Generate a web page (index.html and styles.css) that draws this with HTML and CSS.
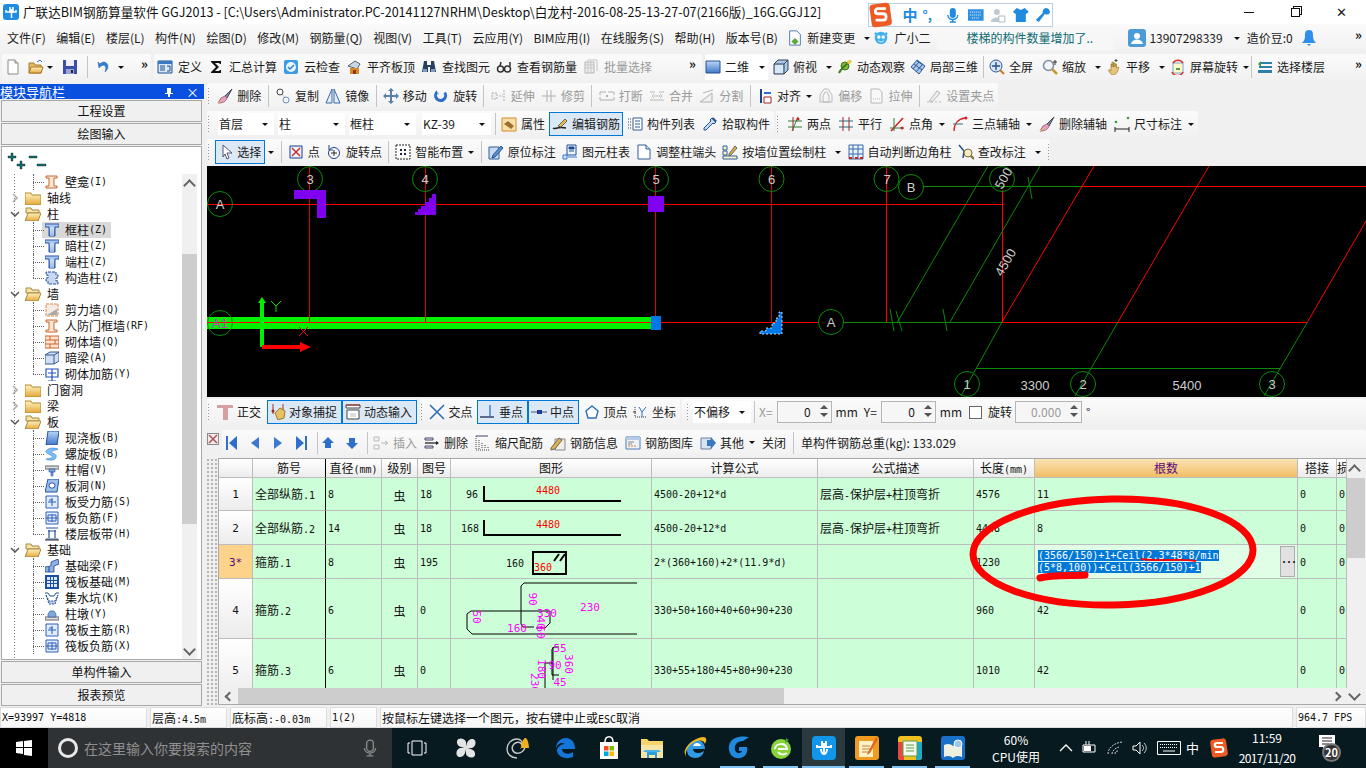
FILE: index.html
```html
<!DOCTYPE html>
<html lang="zh-CN">
<head>
<meta charset="utf-8">
<title>广联达BIM钢筋算量软件 GGJ2013</title>
<link rel="stylesheet" href="styles.css">
</head>
<body>
<svg class="defs" aria-hidden="true">
<defs>
<linearGradient id="gb" x1="0" y1="0" x2="0" y2="1"><stop offset="0" stop-color="#bcd6f6"/><stop offset="1" stop-color="#3f78c8"/></linearGradient>
<linearGradient id="gy" x1="0" y1="0" x2="0" y2="1"><stop offset="0" stop-color="#fff3c0"/><stop offset="1" stop-color="#e5a73a"/></linearGradient>
<symbol id="new" viewBox="0 0 16 16"><path d="M3 1h7l3 3v11H3z" fill="#fff" stroke="#8a8a8a"/><path d="M10 1v3h3" fill="#ddd" stroke="#8a8a8a"/></symbol>
<symbol id="open" viewBox="0 0 16 16"><path d="M1 4h5l1 2h6v8H1z" fill="#e6bb66" stroke="#a57a28"/><path d="M3 8h12l-2 6H1z" fill="url(#gy)" stroke="#a57a28"/><path d="M9 3l3-2 2 2" fill="none" stroke="#3a70c8"/></symbol>
<symbol id="save" viewBox="0 0 16 16"><path d="M1 1h14v14H1z" fill="#3b4fa8"/><path d="M4 1h8v6H4z" fill="#eef"/><path d="M4 10h8v5H4z" fill="#9aa6d8"/><path d="M9 11h2v3H9z" fill="#223"/></symbol>
<symbol id="undo" viewBox="0 0 16 16"><path d="M3 3l1 6 2-2c4-2 6 1 4 6 4-3 4-9-1-10-2 0-3 1-4 2z" fill="#2f7fd6" stroke="#1d5aa8" stroke-width=".5"/></symbol>
<symbol id="def" viewBox="0 0 16 16"><path d="M1 2h14v12H1z" fill="#dbe8f8" stroke="#1d4f8f"/><path d="M1 2h14v3H1z" fill="#3a78c0"/><path d="M3 7h5M3 9h5M3 11h5M10 7h3v5h-3" stroke="#1d4f8f" fill="none"/></symbol>
<symbol id="sigma" viewBox="0 0 16 16"><path d="M3 2h10v3h-1l-1-1H7l4 4-4 4h4l1-1h1v3H3v-1l5-5-5-5z" fill="#111"/></symbol>
<symbol id="cloud" viewBox="0 0 16 16"><rect x="1" y="1" width="14" height="14" rx="2" fill="#3b9be6"/><circle cx="8" cy="8" r="5" fill="#eaf6ff"/><path d="M5 8l2 2 4-4" fill="none" stroke="#2a7fd0" stroke-width="1.5"/></symbol>
<symbol id="plat" viewBox="0 0 16 16"><path d="M2 7l7-5 5 3-3 5z" fill="#c8d6e6" stroke="#566"/><path d="M4 9h9v6H4z" fill="#d88a2a"/><path d="M7 11h3v4H7z" fill="#8a3a18"/></symbol>
<symbol id="binoc" viewBox="0 0 16 16"><path d="M3 2h3v4h4V2h3l2 11H9V8H7v5H1z" fill="#26415f"/><path d="M2 10h4v3H2zM10 10h4v3h-4z" fill="#7e9cbe"/></symbol>
<symbol id="glass" viewBox="0 0 16 16"><circle cx="4.5" cy="10" r="3" fill="none" stroke="#333" stroke-width="1.5"/><circle cx="11.5" cy="10" r="3" fill="none" stroke="#333" stroke-width="1.5"/><path d="M4 7l1-4M14 7V3" stroke="#333" stroke-width="1.5"/></symbol>
<symbol id="batch" viewBox="0 0 16 16"><path d="M2 3h9v11H2z" fill="#eee" stroke="#b5b5b5"/><path d="M2 6h9M2 9h9M5 3v11M8 3v11" stroke="#c5c5c5"/><path d="M4 1h10v11" fill="none" stroke="#c5c5c5"/></symbol>
<symbol id="sq" viewBox="0 0 16 16"><path d="M1 2h14v12H1z" fill="url(#gb)" stroke="#27518f"/></symbol>
<symbol id="cube" viewBox="0 0 16 16"><path d="M1 5l4-4h10v10l-4 4H1z" fill="#a9c8ea" stroke="#345"/><path d="M1 5h10v10M11 5l4-4" fill="none" stroke="#345"/><path d="M2 6h8v8H2z" fill="#d9e8f8"/></symbol>
<symbol id="orbit" viewBox="0 0 16 16"><circle cx="8" cy="7" r="4" fill="#7fb83a" stroke="#3b7a1a"/><path d="M2 14C4 10 8 6 14 2" stroke="#3b7a1a" stroke-width="2" fill="none"/><circle cx="12" cy="3" r="2" fill="#f0d040"/></symbol>
<symbol id="cube3" viewBox="0 0 16 16"><path d="M1 8l6-7 8 6-6 8z" fill="#a8c7ec" stroke="#30598f"/><path d="M4 5l8 6M7 2l6 4M3 10l6-7M6 13l6-7" stroke="#30598f" fill="none"/></symbol>
<symbol id="zfull" viewBox="0 0 16 16"><circle cx="7" cy="7" r="6" fill="#d6e6f8" stroke="#37578a"/><path d="M7 3v8M3 7h8" stroke="#27518f" stroke-width="1.4"/><path d="M11 11l4 4" stroke="#c87a20" stroke-width="2"/></symbol>
<symbol id="zoom" viewBox="0 0 16 16"><circle cx="6.5" cy="6.5" r="5" fill="#f2f6fb" stroke="#7c8ca0" stroke-width="1.5"/><path d="M10 10l5 5" stroke="#c49a30" stroke-width="2.5"/><path d="M13 1v5M11 3h4" stroke="#333"/></symbol>
<symbol id="pan" viewBox="0 0 16 16"><path d="M5 8V5h1v3-5h1.5v5-4H9v4-3h1.500v4l2-1c1 1-2 8-5 8-2 0-4-2-5-5 1-1 2 0 2.500 1z" fill="#e8c47a" stroke="#9a7a30" stroke-width=".7"/><path d="M10 0v3M8.500 1.500h3" stroke="#445"/></symbol>
<symbol id="srot" viewBox="0 0 16 16"><rect x="3" y="4" width="10" height="10" fill="#fff8c8" stroke="#7aa3d0"/><path d="M3 4a6 6 0 0 1 10 0" fill="none" stroke="#d8302a" stroke-width="1.500"/><path d="M13 13a6 6 0 0 1-11 0" fill="none" stroke="#d8302a" stroke-width="1.500"/><path d="M6 9h4v2H6z" fill="#4aa04a"/></symbol>
<symbol id="floors" viewBox="0 0 16 16"><path d="M4 3h11v2H4zM2 7h13v2H2zM1 11h14v3H1z" fill="#2f7fa8"/><path d="M1 5l3-3v6z" fill="#3a9a3a"/></symbol>
<symbol id="brush" viewBox="0 0 16 16"><path d="M15 1L8 8l2 2z" fill="#7a8ab0" stroke="#445"/><path d="M8 8l-4 2-3 5c4 0 8-1 9-5z" fill="#e8a0c0" stroke="#a06a80"/><path d="M1 15l4-3" stroke="#e8c050"/></symbol>
<symbol id="copy" viewBox="0 0 16 16"><circle cx="5" cy="4" r="3" fill="none" stroke="#444"/><circle cx="11" cy="12" r="3" fill="none" stroke="#6a90c0"/><path d="M7 6l3 4" stroke="#777" stroke-dasharray="1 1"/></symbol>
<symbol id="mirror" viewBox="0 0 16 16"><path d="M7 1v14H1zM9 1v14h6z" fill="#e4eef8" stroke="#3a6aa8"/></symbol>
<symbol id="move" viewBox="0 0 16 16"><path d="M8 0l3 3H9v4h4V5l3 3-3 3V9H9v4h2l-3 3-3-3h2V9H3v2L0 8l3-3v2h4V3H5z" fill="#5a7fa8"/></symbol>
<symbol id="rot" viewBox="0 0 16 16"><path d="M3 3a6.500 6.500 0 1 0 9 0l-2 2a3.500 3.500 0 1 1-5 0v3z" fill="#2f6fcc" transform="rotate(10 8 8)"/></symbol>
<symbol id="ext" viewBox="0 0 16 16"><path d="M1 5h5v6H1zM13 2v12M8 8h4" stroke="#b0b0b0" fill="#eee" stroke-dasharray="2 1"/></symbol>
<symbol id="trim" viewBox="0 0 16 16"><path d="M1 8h14M6 2v12M10 2v12" stroke="#b0b0b0" fill="none"/></symbol>
<symbol id="brk" viewBox="0 0 16 16"><path d="M1 4h6M9 4h6M1 12h14M1 4v3M15 4v3M1 12V9M15 12V9" stroke="#b0b0b0" fill="none"/><path d="M7 7l2 2M9 7l-2 2" stroke="#b0b0b0"/></symbol>
<symbol id="merge" viewBox="0 0 16 16"><path d="M1 4h5M10 4h5M1 12h14M5 8h6M5 6L3 8l2 2M11 6l2 2-2 2" stroke="#b8b8b8" fill="none"/></symbol>
<symbol id="split" viewBox="0 0 16 16"><path d="M1 14l12-9v9zM4 5l10-3" stroke="#b0b0b0" fill="#efefef"/></symbol>
<symbol id="algn" viewBox="0 0 16 16"><path d="M3 1h2v14H3z" fill="#1d3f8f"/><path d="M7 4h7v2H7z" fill="#2f6fcc"/><path d="M7 9h7v6H7z" fill="#fff" stroke="#a02828"/></symbol>
<symbol id="offs" viewBox="0 0 16 16"><path d="M2 14V7l4-6h4l4 6v7z" fill="none" stroke="#bbb"/><path d="M5 14V8l2-4h2l2 4v6z" fill="none" stroke="#bbb"/></symbol>
<symbol id="strch" viewBox="0 0 16 16"><path d="M2 1h8l3 3v11H2z" fill="#f8f8f8" stroke="#b8b8b8"/><path d="M4 11h7" stroke="#b8b8b8" stroke-dasharray="1 1"/></symbol>
<symbol id="grips" viewBox="0 0 16 16"><path d="M1 14h14" stroke="#bbb" stroke-dasharray="2 2"/><path d="M4 12l7-9 3 2-7 8-3 1z" fill="#eee" stroke="#b4b4b4"/></symbol>
<symbol id="prop" viewBox="0 0 16 16"><path d="M1 2h14v13H1z" fill="#f6e2a8" stroke="#d88a2a"/><path d="M3 8l4-3 6 5-3 3z" fill="#9a7030"/></symbol>
<symbol id="edit" viewBox="0 0 16 16"><path d="M1 12c2 2 4-2 13 0" fill="none" stroke="#222" stroke-width="1.500"/><path d="M6 10l7-7 2 2-6 6z" fill="#e8c050" stroke="#665"/></symbol>
<symbol id="list" viewBox="0 0 16 16"><path d="M6 2h9v12H6z" fill="#fff" stroke="#2f5f9a"/><path d="M8 5h5M8 8h5M8 11h5" stroke="#2f5f9a"/><path d="M1 3h3M1 6h3M1 9h3M1 12h3" stroke="#445" stroke-dasharray="1 1"/></symbol>
<symbol id="pick" viewBox="0 0 16 16"><path d="M10 2l4 4-2 2-1-1-7 7H2v-2l7-7-1-1z" fill="#c6dcf5" stroke="#25528e"/><path d="M11 1l4 4-2 1-3-3z" fill="#25528e"/></symbol>
<symbol id="twop" viewBox="0 0 16 16"><path d="M1 5h14M1 11h14M11 1L5 15" stroke="#2f7f3a" fill="none"/><path d="M6 1v14" stroke="#a02828"/><circle cx="11" cy="3" r="1.500" fill="#d02020"/></symbol>
<symbol id="para" viewBox="0 0 16 16"><path d="M1 5h14M1 11h14" stroke="#1f6a7a"/><path d="M5 1v14M11 1v14" stroke="#a02828"/></symbol>
<symbol id="ang" viewBox="0 0 16 16"><path d="M1 12h14" stroke="#2f7f3a"/><path d="M2 15L14 2" stroke="#d02020" stroke-width="1.500"/><path d="M5 2v13" stroke="#2f7f3a"/><circle cx="13" cy="12" r="1.500" fill="#d02020"/></symbol>
<symbol id="three" viewBox="0 0 16 16"><path d="M2 15C2 8 6 3 13 2" fill="none" stroke="#d02020" stroke-width="1.300"/><path d="M1 8h10" stroke="#2f6f7a"/><circle cx="14" cy="2" r="1.500" fill="#d02020"/></symbol>
<symbol id="dim" viewBox="0 0 16 16"><path d="M1 11v5M15 11v5M1 13h14" stroke="#222"/><circle cx="2" cy="6" r="1.300" fill="#3a9a3a"/><circle cx="14" cy="2" r="1.300" fill="#3a9a3a"/></symbol>
<symbol id="sel" viewBox="0 0 16 16"><path d="M4 1l9 8H8l2 5-2 1-2-5-2 3z" fill="#fff" stroke="#556"/></symbol>
<symbol id="pt" viewBox="0 0 16 16"><path d="M2 2h12v12H2z" fill="#eaf0fa" stroke="#1d3f8f"/><path d="M4 4l8 8M12 4l-8 8" stroke="#d02020" stroke-width="1.300"/></symbol>
<symbol id="rpt" viewBox="0 0 16 16"><circle cx="8" cy="9" r="5.500" fill="#fff" stroke="#1d3f8f"/><path d="M8 6v6M5 9h6" stroke="#222"/><path d="M3 1v5h4" fill="none" stroke="#1d3f8f"/></symbol>
<symbol id="smart" viewBox="0 0 16 16"><path d="M1 1h14v14H1z" fill="#fff" stroke="#222" stroke-dasharray="2 1"/><path d="M5 5h2v2H5zM9 9h2v2H9zM9 5h2v2H9zM5 9h2v2H5z" fill="#225"/></symbol>
<symbol id="inpl" viewBox="0 0 16 16"><path d="M1 3h10v12H1z" fill="#c8dcf5" stroke="#2f5f9a"/><path d="M5 11l8-9 2 2-8 9-3 1z" fill="#5a8fd0" stroke="#25528e"/></symbol>
<symbol id="ctab" viewBox="0 0 16 16"><path d="M5 1h9v10H5z" fill="#eef4fc" stroke="#1d4f8f"/><path d="M7 3h5v2H7zM7 7h5" stroke="#1d4f8f" fill="#1d4f8f"/><path d="M1 11h4v4H1zM6 13h9" stroke="#2f7fd0" fill="#cfe0f6"/></symbol>
<symbol id="adj" viewBox="0 0 16 16"><path d="M2 1h8l4 4v10H2z" fill="#fff" stroke="#2f5f9a"/><path d="M10 1v4h4" fill="#cfe0f6" stroke="#2f5f9a"/></symbol>
<symbol id="byw" viewBox="0 0 16 16"><path d="M1 2h4v4H1zM1 7h4v4H1zM1 12h14v3H1z" fill="#fff6c8" stroke="#2f5f9a"/><path d="M7 10l6-8 2 2-6 7-2 1z" fill="#e0b040" stroke="#666"/></symbol>
<symbol id="auto" viewBox="0 0 16 16"><path d="M1 1h14v14H1zM1 5h14M1 10h14M5 1v14M10 1v14" fill="#e8f0fc" stroke="#3a6aa8"/><path d="M1 13h3v2H1zM7 13h3v2H7zM12 13h3v2h-3z" fill="#d02020"/></symbol>
<symbol id="chk" viewBox="0 0 16 16"><path d="M1 1l5 6-1 7" fill="none" stroke="#25528e" stroke-width="1.500"/><circle cx="10" cy="9" r="4" fill="#f3ecc8" stroke="#7c6a30"/><path d="M13 12l3 3" stroke="#7c6a30" stroke-width="2"/></symbol>
<symbol id="orth" viewBox="0 0 16 16"><path d="M0 1h16v3H11v12H6V4H0z" fill="#d6a0a0"/></symbol>
<symbol id="snap" viewBox="0 0 16 16"><path d="M3 0v10M13 0v6" stroke="#a02828"/><circle cx="3" cy="7" r="1.500" fill="#a02828"/><path d="M5 9l5-5 5 3-1 7-6 2z" fill="#e8c060" stroke="#9a7a30"/></symbol>
<symbol id="dyn" viewBox="0 0 16 16"><path d="M1 1h14v3H1zM2 6h12v9H2z" fill="#fff" stroke="#444"/><path d="M5 9h6v4H5z" fill="#ddd"/><path d="M1 1h14" stroke="#a02828"/></symbol>
<symbol id="cross" viewBox="0 0 16 16"><path d="M1 1l14 14M15 1L1 15" stroke="#2f6fb8" stroke-width="1.600"/></symbol>
<symbol id="perp" viewBox="0 0 16 16"><path d="M0 13h14" stroke="#225" stroke-width="1.300"/><path d="M10 1v12" stroke="#2f6fcc" stroke-width="1.300"/></symbol>
<symbol id="mid" viewBox="0 0 16 16"><path d="M0 8h16" stroke="#556"/><path d="M6 6h5v4H6z" fill="#1d3f8f"/></symbol>
<symbol id="vert" viewBox="0 0 16 16"><path d="M8 2l6 5-2 7H4L2 7z" fill="#fff" stroke="#2f6fb8" stroke-width="1.400"/></symbol>
<symbol id="coord" viewBox="0 0 16 16"><path d="M3 3v10h11" stroke="#333" fill="none" stroke-dasharray="1 1"/><path d="M7 3l3 5 4-5M10 8v5" stroke="#2f6fcc" fill="none"/><path d="M1 8h3" stroke="#333"/></symbol>
<symbol id="first" viewBox="0 0 16 16"><path d="M3 1h2v14H3zM14 1v14L6 8z" fill="#2f6fcc"/></symbol>
<symbol id="prev" viewBox="0 0 16 16"><path d="M12 2v12L4 8z" fill="#3a7ad0"/></symbol>
<symbol id="next" viewBox="0 0 16 16"><path d="M4 2v12l8-6z" fill="#3a7ad0"/></symbol>
<symbol id="last" viewBox="0 0 16 16"><path d="M11 1h2v14h-2zM2 1v14l8-7z" fill="#2f6fcc"/></symbol>
<symbol id="up" viewBox="0 0 16 16"><path d="M8 2l6 6h-3v5H5V8H2z" fill="#2f6fcc"/></symbol>
<symbol id="down" viewBox="0 0 16 16"><path d="M8 14l6-6h-3V3H5v5H2z" fill="#2f6fcc"/></symbol>
<symbol id="ins" viewBox="0 0 16 16"><path d="M1 2h5v4H1zM1 10h5v4H1z" fill="#f4f4f4" stroke="#bbb"/><path d="M8 8h7M12 6l3 2-3 2" stroke="#bbb" fill="none"/></symbol>
<symbol id="del" viewBox="0 0 16 16"><path d="M1 3h8v2H1zM1 11h8v2H1z" fill="#eef" stroke="#446"/><path d="M1 8h13" stroke="#222" stroke-width="1.300"/><path d="M12 6l3 2-3 2z" fill="#222"/></symbol>
<symbol id="scale" viewBox="0 0 16 16"><path d="M1 1v14h14M4 5v9M7 8v6M10 10v4M13 12v2" stroke="#444" fill="none" stroke-dasharray="1 1"/><path d="M1 1h12" stroke="#446"/></symbol>
<symbol id="info" viewBox="0 0 16 16"><path d="M5 4h10v11H5z" fill="#f0f0e8" stroke="#889"/><path d="M1 13l8-10 3 2-7 9-4 1z" fill="#e0b050" stroke="#665"/></symbol>
<symbol id="lib" viewBox="0 0 16 16"><path d="M1 2h14v12H1z" fill="#eef3fb" stroke="#4a7ab8"/><path d="M1 2h14v3H1z" fill="#b4cbe9"/><path d="M3 7h6M3 9h4" stroke="#888"/><path d="M3 11h2M6 11h2M9 11h2" stroke="#d08030"/></symbol>
<symbol id="oth" viewBox="0 0 16 16"><path d="M1 3h10v11H1z" fill="#d7e4f5" stroke="#6c7f99"/><path d="M7 5h4V2l5 6-5 6v-3H7z" fill="#3a78c0"/></symbol>
<symbol id="fc" viewBox="0 0 16 14"><path d="M0 2h6l1 2h9v10H0z" fill="url(#gy)" stroke="#b08a30"/></symbol>
<symbol id="fo" viewBox="0 0 16 14"><path d="M1 1h5l1 2h7v3H1z" fill="#f5e3a8" stroke="#a58a40"/><path d="M3 6h13l-3 8H0z" fill="url(#gy)" stroke="#a58a40"/></symbol>
<symbol id="cr" viewBox="0 0 10 10"><path d="M3 1l4 4-4 4" fill="none" stroke="#aaa" stroke-width="1.500"/></symbol>
<symbol id="cd" viewBox="0 0 10 10"><path d="M1 3l4 4 4-4" fill="none" stroke="#555" stroke-width="1.500"/></symbol>
<symbol id="ni" viewBox="0 0 14 14"><path d="M1 1h11v2H9v8h3v2H1v-2h3V3H1z" fill="#fde8d8" stroke="#c8642a"/></symbol>
<symbol id="tc" viewBox="0 0 14 14"><path d="M0 1h14v3H10v9H4V4H0z" fill="url(#gb)" stroke="#2750a0"/><path d="M5 4h4v9H5z" fill="#fff" opacity=".5"/></symbol>
<symbol id="gzz" viewBox="0 0 14 14"><path d="M3 1h8v3h2v3h-2v3h2v3H3v-3H1V7h2V4H1V1z" fill="#c8d8f0" stroke="#2750a0" stroke-dasharray="3 1"/></symbol>
<symbol id="shw" viewBox="0 0 14 14"><path d="M1 1h12v12H1z" fill="#f4ece4" stroke="#d88a4a" stroke-dasharray="3 1"/><path d="M2 12L12 6v6z" fill="#aaa"/></symbol>
<symbol id="brk2" viewBox="0 0 14 14"><path d="M0 1h14v12H0z" fill="#fde3d0" stroke="#c8642a"/><path d="M0 5h14M0 9h14M5 1v4M10 5v4M5 9v4" stroke="#c8642a"/></symbol>
<symbol id="bm" viewBox="0 0 14 14"><path d="M0 4l5-3h9v9l-5 3H0z" fill="#cfe0f6" stroke="#345a8f"/><path d="M0 4h9v9M9 4l5-3" fill="none" stroke="#345a8f"/></symbol>
<symbol id="mj" viewBox="0 0 14 14"><path d="M1 2h12v8H1zM7 2v12M3 6h8M3 14h8" fill="none" stroke="#2750c0" stroke-width="1.200"/></symbol>
<symbol id="xj" viewBox="0 0 14 14"><path d="M3 0h11l-2 14H1z" fill="url(#gb)" stroke="#2750a0"/></symbol>
<symbol id="lx" viewBox="0 0 14 14"><path d="M1 4c3-4 9-3 12-2-4 2-8 2-6 4 3 1 6 2 3 6-3 2-7 1-9 0 4-1 8-1 6-3C4 7 0 6 1 4z" fill="#7fbdf0" stroke="#2f7fd0" stroke-width=".6"/></symbol>
<symbol id="zm" viewBox="0 0 14 14"><path d="M0 3h14v3H0z" fill="#ddd" stroke="#666"/><path d="M4 6h6v3H4zM6 9h2v4H6z" fill="#7fa8dc" stroke="#2750a0" stroke-width=".6"/></symbol>
<symbol id="bd" viewBox="0 0 14 14"><path d="M3 0h11l-2 13H0z" fill="#9cc0ee" stroke="#2750a0"/><rect x="4" y="4" width="6" height="5" rx="2.500" fill="#fff" stroke="#2750a0"/></symbol>
<symbol id="sl" viewBox="0 0 14 14"><path d="M1 1h12v12H1z" fill="#e2ecfb" stroke="#2f5fb8"/><path d="M7 3v8M3 7h8M4 5h4" stroke="#2f5fb8" fill="none"/></symbol>
<symbol id="fj" viewBox="0 0 14 14"><path d="M1 1h12v12H1z" fill="#e2ecfb" stroke="#2f5fb8"/><path d="M1 7h12M7 3v8M3 4h8v6H3z" fill="none" stroke="#2f5fb8"/></symbol>
<symbol id="bdd" viewBox="0 0 14 14"><path d="M1 1h12M1 12h12M4 3v8M10 3v8M3 4h8" stroke="#2750a0" fill="none" stroke-width="1.200"/><path d="M0 13h14" stroke="#222"/></symbol>
<symbol id="jcl" viewBox="0 0 14 14"><path d="M0 13V8l6-1V3l7-3 1 5-5 2v6z" fill="#8fb4e4" stroke="#1d3f8f" stroke-width=".8"/><path d="M4 8v5" stroke="#1d3f8f"/></symbol>
<symbol id="fb" viewBox="0 0 14 14"><path d="M0 0h14v14H0z" fill="#1d4f9f"/><path d="M2 2h3v3H2zM6 2h2v3H6zM9 2h3v3H9zM2 6h3v2H2zM6 6h2v2H6zM9 6h3v2H9zM2 9h3v3H2zM6 9h2v3H6zM9 9h3v3H9z" fill="#dbe7f8"/></symbol>
<symbol id="jsk" viewBox="0 0 14 14"><path d="M0 2h3l2 3h4l2-3h3" fill="none" stroke="#2750a0"/><path d="M1 4l3 6h6l3-6-3 9H4z" fill="#b8cde8" stroke="#2750a0" stroke-dasharray="2 1"/></symbol>
<symbol id="zd" viewBox="0 0 14 14"><path d="M0 10h14v3H0z" fill="#ddd" stroke="#666"/><path d="M3 7l2-3h4l2 3v3H3z" fill="#7fa8dc" stroke="#2750a0" stroke-width=".6"/></symbol>
<symbol id="win" viewBox="0 0 16 16"><path d="M0 2l7-1v6H0zM8 1l8-1v7H8zM0 8h7v6l-7-1zM8 8h8v8l-8-1z" fill="#fff"/></symbol>
<symbol id="mic" viewBox="0 0 16 16"><rect x="5" y="1" width="6" height="10" rx="3" fill="none" stroke="#8a8a8a" stroke-width="1.200"/><path d="M3 8c0 6 10 6 10 0M8 13v2M5 15h6" fill="none" stroke="#8a8a8a" stroke-width="1.200"/></symbol>
<symbol id="imem" viewBox="0 0 16 16"><rect x="5" y="1" width="6" height="10" rx="3" fill="#1f8ae0"/><path d="M3 8c0 6 10 6 10 0M8 13v2M5 15h6" fill="none" stroke="#1f8ae0" stroke-width="1.400"/></symbol>
<symbol id="tv" viewBox="0 0 20 16"><path d="M5 1h10v14H5zM3 3H1v10h2M17 3h2v10h-2" fill="none" stroke="#fff"/></symbol>
<symbol id="fan" viewBox="0 0 22 22"><path d="M11 11C7 11 1 9 2 4c1-4 8-3 9 1zM11 11c0-4 2-10 7-9 4 1 3 8-1 9zM11 11c4 0 10 2 9 7-1 4-8 3-9-1zM11 11c0 4-2 10-7 9-4-1-3-8 1-9z" fill="#e4e4e4"/></symbol>
<symbol id="swirl" viewBox="0 0 26 24"><path d="M13 22c-6 0-10-4-10-9S7 3 13 3c4 0 6 3 5 6-1-3-5-4-8-1s-2 8 2 9 9-2 9-7" fill="none" stroke="#c8c8c8" stroke-width="1.400"/><path d="M17 13c0-5 2-10 4-11s4 5 4 10h2h-11z" fill="#f0b020"/></symbol>
<symbol id="edge" viewBox="0 0 22 22"><path d="M2 11C2 4 8 1 12 1c6 0 9 5 9 11H8c0 5 7 6 11 3v5c-7 3-16 0-16-7 1-4 5-6 8-6-3-2-7-1-9 4z" fill="#1376d8"/></symbol>
<symbol id="store" viewBox="0 0 22 24"><path d="M2 6h18v17H2z" fill="#fff"/><path d="M7 6c0-7 8-7 8 0" fill="none" stroke="#fff" stroke-width="1.500"/><path d="M6 10h4.500v4.500H6z" fill="#f25022"/><path d="M11.500 10H16v4.500h-4.500z" fill="#7fba00"/><path d="M6 15.500h4.500V20H6z" fill="#00a4ef"/><path d="M11.500 15.500H16V20h-4.500z" fill="#ffb900"/></symbol>
<symbol id="fold" viewBox="0 0 24 22"><path d="M1 2h6l2 2h14v17H1z" fill="#f8d56a"/><path d="M1 8h22v13H1z" fill="#f5e6a8"/><path d="M7 15h10v6h-2v-3H9v3H7z" fill="#2f9bd8"/><path d="M5 13h14l2 2H3z" fill="#4ab0e8"/></symbol>
<symbol id="ie" viewBox="0 0 24 24"><path d="M4 14c0-6 5-10 10-10 5 0 8 4 8 9H10c0 5 7 5 11 2-1 4-4 7-8 7-6 0-9-3-9-8z" fill="#2f9ae8"/><path d="M10 10h8c-1-4-7-4-8 0z" fill="#fff"/><path d="M2 18C0 12 10 2 20 1c4 0 4 3 2 7C21 4 16 3 10 7 5 10 2 15 3 21z" fill="#f0b820"/></symbol>
<symbol id="gg" viewBox="0 0 24 24"><path d="M13 1c-7 1-11 6-10 13 1 6 6 9 11 8 6-1 8-6 7-11h-8v4h3c-1 3-6 3-7-1-1-5 2-9 8-9l3-2 3-2c-2 0-6-1-10 0z" fill="#1f8ae0"/></symbol>
<symbol id="ge" viewBox="0 0 24 24"><circle cx="12" cy="13" r="10" fill="#86d43a"/><path d="M17 2l3 2-4 3z" fill="#2f9a3a"/><path d="M6 13c0-6 11-7 12 0H9m0 3c2 3 6 3 9 1" fill="none" stroke="#fff" stroke-width="2"/></symbol>
<symbol id="app" viewBox="0 0 24 24"><rect width="24" height="24" rx="4" fill="#1296ec"/><path d="M10 5v6H5v-2M14 5v6h5v-2M12 7v12" fill="none" stroke="#fff" stroke-width="2"/><path d="M9 13a3 5 0 0 0 6 0" fill="none" stroke="#fff" stroke-width="2"/></symbol>
<symbol id="note" viewBox="0 0 24 24"><rect width="24" height="24" rx="3" fill="#f09a20"/><path d="M4 5h14v16H4z" fill="#fff2c8"/><path d="M7 10h8M7 13h8M7 16h6" stroke="#c08030"/><path d="M21 1L13 16l-1 3 3-2 8-14z" fill="#e06820"/></symbol>
<symbol id="gr" viewBox="0 0 24 24"><rect width="24" height="24" rx="3" fill="#f0c020"/><path d="M0 6h6v18H3a3 3 0 0 1-3-3z" fill="#e8483a"/><path d="M18 6h6v15a3 3 0 0 1-3 3h-3z" fill="#20a8c8"/><path d="M5 5h14v15H5z" fill="#f4f8f0" stroke="#5aa040"/><path d="M8 9h8M8 12h8M8 15h8" stroke="#5aa040"/></symbol>
<symbol id="bk" viewBox="0 0 24 24"><rect width="24" height="24" rx="3" fill="#1870c8"/><path d="M3 9c4-2 7-1 9 1 2-2 5-3 9-1v12c-4-2-7-1-9 1-2-2-5-3-9-1z" fill="#f0f0e0"/><circle cx="17" cy="8" r="4" fill="#9cc8f0" stroke="#fff"/></symbol>
<symbol id="car" viewBox="0 0 14 8"><path d="M1 7l6-6 6 6" fill="none" stroke="#fff" stroke-width="1.300"/></symbol>
<symbol id="bat" viewBox="0 0 16 14"><path d="M1 4h12v7H1z" fill="none" stroke="#fff"/><path d="M2 5h7v5H2z" fill="#fff"/><path d="M4 0v4M7 0v4" stroke="#fff"/></symbol>
<symbol id="wifi" viewBox="0 0 16 14"><path d="M1 13C1 7 7 2 15 1M5 13c0-3 3-6 7-7M8 13c0-2 1-3 3-3" fill="none" stroke="#ccc" stroke-dasharray="2 1"/></symbol>
<symbol id="spk" viewBox="0 0 16 14"><path d="M1 5h3l4-4v12L4 9H1z" fill="none" stroke="#fff"/><path d="M10 4c2 2 2 4 0 6M12 2c3 3 3 7 0 10" fill="none" stroke="#ccc"/></symbol>
<symbol id="kb" viewBox="0 0 24 14"><path d="M.5.500h23v13H.5z" fill="none" stroke="#fff"/><path d="M3 3.500h18M3 6.500h18" stroke="#fff" stroke-dasharray="1 1"/><path d="M6 10h12" stroke="#fff"/></symbol>
<symbol id="sg" viewBox="0 0 20 20"><rect x="2" y="1" width="16" height="18" rx="3" fill="#ee5a24" transform="rotate(-8 10 10)"/><path d="M14 5H8C5 5 5 9 8 9h4c3 0 3 5 0 5H6" fill="none" stroke="#fff" stroke-width="2.200"/></symbol>
<symbol id="msg" viewBox="0 0 18 18"><path d="M1 1h16v12H8l-3 4v-4H1z" fill="#fff"/><path d="M4 4h10M4 7h10M4 10h7" stroke="#222"/></symbol>
<symbol id="logo" viewBox="0 0 16 16"><rect width="16" height="16" rx="3" fill="#1f8ce0"/><path d="M7 3v5H3V6M10 3v5h3V6M8.500 5v9" fill="none" stroke="#fff" stroke-width="1.500"/></symbol>
<symbol id="docg" viewBox="0 0 16 18"><path d="M2 1h8l4 4v12H2z" fill="#fff" stroke="#3a6fb0"/><path d="M8 9l4 4-4 4-4-4z" fill="#5aa83a"/></symbol>
<symbol id="mon" viewBox="0 0 18 18"><circle cx="9" cy="9" r="7" fill="#3fb0ef"/><path d="M2 5l2-2M16 5l-2-2" stroke="#3fb0ef" stroke-width="2"/><circle cx="6.500" cy="8" r="2" fill="#fff"/><circle cx="11.500" cy="8" r="2" fill="#fff"/><path d="M6 12c2 2 4 2 6 0" stroke="#fff" fill="none"/></symbol>
<symbol id="usr" viewBox="0 0 18 18"><rect width="18" height="18" rx="3" fill="#4a9bd8"/><circle cx="9" cy="7" r="3" fill="#fff"/><path d="M3 15c1-6 11-6 12 0z" fill="#fff"/></symbol>
<symbol id="bell" viewBox="0 0 14 18"><path d="M7 1c4 0 4 3 4 6 0 3 1 5 3 7H0c2-2 3-4 3-7 0-3 0-6 4-6zM5 15h4l-2 2z" fill="#2f8fe8"/></symbol>
<symbol id="ppin" viewBox="0 0 10 10"><path d="M3 1h4v5h2v1H6v3H4V7H1V6h2z" fill="#fff"/></symbol>
<symbol id="pl" viewBox="0 0 22 22"><path d="M6 3v3H3v2h3v3h2V8h3V6H8V3zM15 11v3h-3v2h3v3h2v-3h3v-2h-3v-3z" fill="#0e6e6e" stroke="#222" stroke-width=".4"/></symbol>
<symbol id="mn" viewBox="0 0 22 22"><path d="M2 6h8v2H2zM10 14h9v2h-9z" fill="#0e6e6e" stroke="#222" stroke-width=".4"/></symbol>
<symbol id="imek" viewBox="0 0 18 16"><path d="M1 2h16v12H1z" fill="#2f8fe0"/><path d="M3 5h12M3 8h12M5 11h8" stroke="#fff" stroke-dasharray="1 1"/></symbol>
<symbol id="imet" viewBox="0 0 16 16"><path d="M4 1l4 2 4-2 4 4-3 2v8H3V7L0 5z" fill="#1f8ae0"/></symbol>
<symbol id="imew" viewBox="0 0 16 16"><path d="M11 1a4 4 0 0 1 4 5 4 4 0 0 1-5 1l-6 8-3-2 7-7a4 4 0 0 1 3-5z" fill="#1f8ae0"/></symbol>
<symbol id="imeu" viewBox="0 0 16 16"><circle cx="7" cy="5" r="3" fill="#c0c8d0"/><path d="M1 15c0-6 12-6 12 0z" fill="#c0c8d0"/><path d="M9 9h6v6H9z" fill="#fff" stroke="#b0b8c0"/></symbol>
<symbol id="clo" viewBox="0 0 12 12"><path d="M0 0h12v12H0z" fill="#8a8a8a"/><path d="M1 1h10v10H1z" fill="#eee"/><path d="M2 2l8 8M10 2l-8 8" stroke="#b05050" stroke-width="1.500"/></symbol>
</defs>
</svg>

<div class="app">
  <header class="title">
    <svg class="i logo"><use href="#logo"/></svg>
    <span class="ttext">广联达BIM钢筋算量软件 GGJ2013 - [C:\Users\Administrator.PC-20141127NRHM\Desktop\白龙村-2016-08-25-13-27-07(2166版)_16G.GGJ12]</span>
    <div class="winbtns">
      <span class="wb"><i class="wmin"></i></span>
      <span class="wb"><i class="wmax"></i></span>
      <span class="wb wclose">✕</span>
    </div>
  </header>

  <nav class="menu">
    <span>文件(F)</span><span>编辑(E)</span><span>楼层(L)</span><span>构件(N)</span><span>绘图(D)</span><span>修改(M)</span><span>钢筋量(Q)</span><span>视图(V)</span><span>工具(T)</span><span>云应用(Y)</span><span>BIM应用(I)</span><span>在线服务(S)</span><span>帮助(H)</span><span>版本号(B)</span>
    <div class="it mi"><svg class="i"><use href="#docg"/></svg>新建变更<b class="ar"></b></div>
    <div class="it mi2"><svg class="i"><use href="#mon"/></svg>广小二</div>
    <div class="news">楼梯的构件数量增加了..</div>
    <div class="it account"><svg class="i iu"><use href="#usr"/></svg>13907298339<b class="ar"></b></div>
    <span class="dou">造价豆:0</span>
    <svg class="i bell"><use href="#bell"/></svg>
    <span class="more mmore">»</span>
  </nav>

  <div class="row1">
    <div class="bar b1">
      <svg class="i"><use href="#new"/></svg>
      <svg class="i"><use href="#open"/></svg><b class="ar a0"></b>
      <svg class="i sv"><use href="#save"/></svg>
      <i class="sep"></i>
      <svg class="i"><use href="#undo"/></svg><b class="ar a3"></b>
      <span class="more rt rr">»</span>
    </div>
    <div class="bar b2">
      <div class="it g5"><svg class="i"><use href="#def"/></svg>定义</div>
      <div class="it g5"><svg class="i"><use href="#sigma"/></svg>汇总计算</div>
      <div class="it g5"><svg class="i"><use href="#cloud"/></svg>云检查</div>
      <div class="it g5"><svg class="i"><use href="#plat"/></svg>平齐板顶</div>
      <div class="it g5"><svg class="i"><use href="#binoc"/></svg>查找图元</div>
      <div class="it g5"><svg class="i"><use href="#glass"/></svg>查看钢筋量</div>
      <div class="it g5 dis"><svg class="i"><use href="#batch"/></svg>批量选择</div>
      <span class="more rt">»</span>
    </div>
    <div class="bar b3">
      <div class="it whitebox"><svg class="i"><use href="#sq"/></svg><span class="w2d">二维</span><b class="ar"></b></div>
      <div class="it"><svg class="i"><use href="#cube"/></svg>俯视<b class="ar"></b></div>
      <div class="it"><svg class="i"><use href="#orbit"/></svg>动态观察</div>
      <div class="it"><svg class="i"><use href="#cube3"/></svg>局部三维</div>
      <i class="sep"></i>
      <div class="it"><svg class="i"><use href="#zfull"/></svg>全屏</div>
      <div class="it zm2"><svg class="i"><use href="#zoom"/></svg>缩放<b class="ar"></b></div>
      <div class="it"><svg class="i"><use href="#pan"/></svg>平移<b class="ar"></b></div>
      <div class="it"><svg class="i"><use href="#srot"/></svg>屏幕旋转<b class="ar a1"></b></div>
      <i class="sep s9"></i>
      <div class="it"><svg class="i"><use href="#floors"/></svg>选择楼层</div>
      <span class="more rt">»</span>
    </div>
  </div>

  <div class="main">
    <aside class="nav">
      <div class="navhead"><span>模块导航栏</span><svg class="pin"><use href="#ppin"/></svg><span class="navx">×</span></div>
      <button class="navbtn">工程设置</button>
      <button class="navbtn">绘图输入</button>
      <div class="treebox">
        <div class="treebar"><svg class="pm"><use href="#pl"/></svg><svg class="pm"><use href="#mn"/></svg></div>
        <div class="treeview">
          <div class="tree">
            <div class="node kid"><svg class="ti"><use href="#ni"/></svg><span class="cn">壁龛</span>(I)</div>
            <div class="node fold"><svg class="tw"><use href="#cr"/></svg><svg class="fi"><use href="#fc"/></svg><span class="cn">轴线</span></div>
            <div class="node fold"><svg class="tw"><use href="#cd"/></svg><svg class="fi"><use href="#fo"/></svg><span class="cn">柱</span></div>
            <div class="node kid on"><svg class="ti"><use href="#tc"/></svg><span class="cn">框柱</span>(Z)</div>
            <div class="node kid"><svg class="ti"><use href="#tc"/></svg><span class="cn">暗柱</span>(Z)</div>
            <div class="node kid"><svg class="ti"><use href="#tc"/></svg><span class="cn">端柱</span>(Z)</div>
            <div class="node kid last"><svg class="ti"><use href="#gzz"/></svg><span class="cn">构造柱</span>(Z)</div>
            <div class="node fold"><svg class="tw"><use href="#cd"/></svg><svg class="fi"><use href="#fo"/></svg><span class="cn">墙</span></div>
            <div class="node kid"><svg class="ti"><use href="#shw"/></svg><span class="cn">剪力墙</span>(Q)</div>
            <div class="node kid"><svg class="ti"><use href="#ni"/></svg><span class="cn">人防门框墙</span>(RF)</div>
            <div class="node kid"><svg class="ti"><use href="#brk2"/></svg><span class="cn">砌体墙</span>(Q)</div>
            <div class="node kid"><svg class="ti"><use href="#bm"/></svg><span class="cn">暗梁</span>(A)</div>
            <div class="node kid last"><svg class="ti"><use href="#mj"/></svg><span class="cn">砌体加筋</span>(Y)</div>
            <div class="node fold"><svg class="tw"><use href="#cr"/></svg><svg class="fi"><use href="#fc"/></svg><span class="cn">门窗洞</span></div>
            <div class="node fold"><svg class="tw"><use href="#cr"/></svg><svg class="fi"><use href="#fc"/></svg><span class="cn">梁</span></div>
            <div class="node fold"><svg class="tw"><use href="#cd"/></svg><svg class="fi"><use href="#fo"/></svg><span class="cn">板</span></div>
            <div class="node kid"><svg class="ti"><use href="#xj"/></svg><span class="cn">现浇板</span>(B)</div>
            <div class="node kid"><svg class="ti"><use href="#lx"/></svg><span class="cn">螺旋板</span>(B)</div>
            <div class="node kid"><svg class="ti"><use href="#zm"/></svg><span class="cn">柱帽</span>(V)</div>
            <div class="node kid"><svg class="ti"><use href="#bd"/></svg><span class="cn">板洞</span>(N)</div>
            <div class="node kid"><svg class="ti"><use href="#sl"/></svg><span class="cn">板受力筋</span>(S)</div>
            <div class="node kid"><svg class="ti"><use href="#fj"/></svg><span class="cn">板负筋</span>(F)</div>
            <div class="node kid last"><svg class="ti"><use href="#bdd"/></svg><span class="cn">楼层板带</span>(H)</div>
            <div class="node fold"><svg class="tw"><use href="#cd"/></svg><svg class="fi"><use href="#fo"/></svg><span class="cn">基础</span></div>
            <div class="node kid"><svg class="ti"><use href="#jcl"/></svg><span class="cn">基础梁</span>(F)</div>
            <div class="node kid"><svg class="ti"><use href="#fb"/></svg><span class="cn">筏板基础</span>(M)</div>
            <div class="node kid"><svg class="ti"><use href="#jsk"/></svg><span class="cn">集水坑</span>(K)</div>
            <div class="node kid"><svg class="ti"><use href="#zd"/></svg><span class="cn">柱墩</span>(Y)</div>
            <div class="node kid"><svg class="ti"><use href="#sl"/></svg><span class="cn">筏板主筋</span>(R)</div>
            <div class="node kid"><svg class="ti"><use href="#fj"/></svg><span class="cn">筏板负筋</span>(X)</div>
          </div>
          <div class="tscroll"><span class="tup"></span><span class="tthumb"></span><span class="tdn"></span></div>
        </div>
      </div>
      <button class="navbtn">单构件输入</button>
      <button class="navbtn">报表预览</button>
    </aside>

    <section class="work">
      <div class="tbrow">
        <div class="bar tb r2">
          <i class="grip"></i>
          <div class="it"><svg class="i"><use href="#brush"/></svg>删除</div><i class="sep"></i>
          <div class="it"><svg class="i"><use href="#copy"/></svg>复制</div>
          <div class="it"><svg class="i"><use href="#mirror"/></svg>镜像</div><i class="sep"></i>
          <div class="it"><svg class="i"><use href="#move"/></svg>移动</div>
          <div class="it"><svg class="i"><use href="#rot"/></svg>旋转</div><i class="sep"></i>
          <div class="it dis"><svg class="i"><use href="#ext"/></svg>延伸</div>
          <div class="it dis"><svg class="i"><use href="#trim"/></svg>修剪</div><i class="sep"></i>
          <div class="it dis"><svg class="i"><use href="#brk"/></svg>打断</div>
          <div class="it dis"><svg class="i"><use href="#merge"/></svg>合并</div>
          <div class="it dis"><svg class="i"><use href="#split"/></svg>分割</div><i class="sep"></i>
          <div class="it"><svg class="i"><use href="#algn"/></svg>对齐<b class="ar a1"></b></div>
          <div class="it dis"><svg class="i"><use href="#offs"/></svg>偏移</div>
          <div class="it dis"><svg class="i"><use href="#strch"/></svg>拉伸</div><i class="sep"></i>
          <div class="it dis"><svg class="i"><use href="#grips"/></svg>设置夹点</div>
        </div>
      </div>
      <div class="tbrow">
        <div class="bar tb r3a">
          <i class="grip"></i>
          <div class="combo c1">首层<b class="ar"></b></div>
          <div class="combo c2">柱<b class="ar"></b></div>
          <div class="combo c2">框柱<b class="ar"></b></div>
          <div class="combo c3">KZ-39<b class="ar"></b></div>
          <i class="sep s3"></i>
          <div class="it pr"><svg class="i"><use href="#prop"/></svg>属性</div>
          <div class="it hl hn"><svg class="i"><use href="#edit"/></svg>编辑钢筋</div>
          <div class="it"><svg class="i"><use href="#list"/></svg>构件列表</div>
          <div class="it"><svg class="i"><use href="#pick"/></svg>拾取构件</div>
        </div>
        <div class="bar tb r3b">
          <i class="grip"></i>
          <div class="it"><svg class="i"><use href="#twop"/></svg>两点</div>
          <div class="it"><svg class="i"><use href="#para"/></svg>平行</div>
          <div class="it"><svg class="i"><use href="#ang"/></svg>点角<b class="ar"></b></div>
          <div class="it"><svg class="i"><use href="#three"/></svg>三点辅轴<b class="ar"></b></div>
          <div class="it"><svg class="i"><use href="#brush"/></svg>删除辅轴</div>
          <div class="it"><svg class="i"><use href="#dim"/></svg>尺寸标注<b class="ar"></b></div>
        </div>
      </div>
      <div class="tbrow">
        <div class="bar tb r4">
          <i class="grip g0"></i>
          <div class="it hl sel1"><svg class="i"><use href="#sel"/></svg>选择</div><b class="ar a2"></b><i class="sep"></i>
          <div class="it"><svg class="i"><use href="#pt"/></svg>点</div>
          <div class="it"><svg class="i"><use href="#rpt"/></svg>旋转点</div><i class="sep"></i>
          <div class="it"><svg class="i"><use href="#smart"/></svg>智能布置<b class="ar a1"></b></div><i class="sep"></i>
          <div class="it"><svg class="i"><use href="#inpl"/></svg>原位标注</div>
          <div class="it"><svg class="i"><use href="#ctab"/></svg>图元柱表</div>
          <div class="it"><svg class="i"><use href="#adj"/></svg>调整柱端头</div>
          <div class="it"><svg class="i"><use href="#byw"/></svg>按墙位置绘制柱<b class="ar"></b></div>
          <div class="it"><svg class="i"><use href="#auto"/></svg>自动判断边角柱</div>
          <div class="it"><svg class="i"><use href="#chk"/></svg>查改标注<b class="ar"></b></div>
          <i class="grip g2"></i>
        </div>
      </div>

      <svg class="cad" viewBox="207 166 1159 231" role="img" aria-label="CAD 绘图区">
        <rect x="207" y="317" width="444" height="12" fill="#00f000"/>
        <g stroke="#e00000" fill="none">
          <path d="M309.500 166V322M425.500 166V322M655.500 166V322M771.500 166V322"/>
          <path d="M207 204.500H1002M207 322.500H819M886.500 166V322M1002.500 190V322M1002 322.500H1307M1081 186.500H1366" stroke="#ff0000"/>
          <path d="M1002 322L1094 166M1118 322L1209 166M1307.500 322L1366 221" stroke="#ff0000"/>
        </g>
        <g stroke="#0a8a0a" fill="none">
          <path d="M923 186.500H1081M843 322.500H1002M897.500 322L988 166M950 322L1040 166M1002 322L961 396M1118 322L1075 396M1307.500 322L1264 396M976 368.500H1281"/>
          <path d="M894 331l-4-22M947 331l-4-22M1032 199l-4-22M896 311l6 20"/>
          <circle cx="310" cy="179" r="12.500"/><circle cx="425" cy="179" r="12.500"/><circle cx="656" cy="179" r="12.500"/><circle cx="771.500" cy="179" r="12.500"/><circle cx="886.500" cy="179" r="12.500"/><circle cx="911" cy="187" r="12.500"/><circle cx="1002" cy="179" r="12.500"/>
          <circle cx="220" cy="204" r="12.500"/><circle cx="220" cy="323" r="12.500"/><circle cx="831" cy="322" r="12.500"/>
          <circle cx="967" cy="384" r="12.500"/><circle cx="1083" cy="384" r="12.500"/><circle cx="1272" cy="384" r="12.500"/>
        </g>
        <path d="M294 190H326V218H317V199H294z" fill="#8000f0"/>
        <path d="M436 194V215H415V212H418V209H421V206H425V202H429V198H432V194z" fill="#8000f0"/>
        <path d="M648 196H664V212H648z" fill="#8000f0"/>
        <path d="M651 316H661V330H651z" fill="#0078e8"/>
        <path d="M782 312V334H760V331H766V328H772V323H776V318H779V312z" fill="#0078e8" stroke="#fff" stroke-dasharray="2 2" stroke-width=".8"/>
        <path d="M207 322.500H651" stroke="#ff0000"/>
        <path d="M260 347V303h-2l4-6 4 6h-2v44z" fill="#00f000"/>
        <path d="M262 345h38v-3l11 5-11 5v-3h-38z" fill="#ff0000"/>
        <path d="M271 301l5 5 5-5M276 306v6" stroke="#00e000" fill="none"/>
        <path d="M299 327l9 9M308 327l-9 9" stroke="#ee0000"/>
        <g class="cadt">
          <text x="310" y="184">3</text><text x="425" y="184">4</text><text x="656" y="184">5</text><text x="771.500" y="184">6</text>
          <text x="887" y="184">7</text><text x="911" y="192">B</text>
          <text x="220" y="209">A</text><text x="831" y="327">A</text><text class="a1t" x="220" y="328">A1</text>
          <text x="967" y="389">1</text><text x="1083" y="389">2</text><text x="1272" y="389">3</text>
          <text x="1035" y="390">3300</text><text x="1187" y="390">5400</text>
          <text transform="translate(1005 262) rotate(-60)" y="5">4500</text>
          <text transform="translate(1003 178) rotate(-60)" y="5">500</text>
        </g>
      </svg>

      <div class="snaprow">
        <div class="bar tb s1">
          <i class="grip"></i>
          <div class="it"><svg class="i"><use href="#orth"/></svg>正交</div>
          <div class="it hl h1"><svg class="i"><use href="#snap"/></svg>对象捕捉</div>
          <div class="it hl h1"><svg class="i"><use href="#dyn"/></svg>动态输入</div>
        </div>
        <div class="bar tb s2">
          <i class="grip"></i>
          <div class="it"><svg class="i"><use href="#cross"/></svg>交点</div>
          <div class="it hl h2"><svg class="i"><use href="#perp"/></svg>垂点</div>
          <div class="it hl h2"><svg class="i"><use href="#mid"/></svg>中点</div>
          <div class="it"><svg class="i"><use href="#vert"/></svg>顶点</div>
          <div class="it"><svg class="i"><use href="#coord"/></svg>坐标</div>
        </div>
        <div class="bar tb s3b">
          <i class="grip"></i>
          <div class="combo c4">不偏移<b class="ar"></b></div>
          <i class="sep"></i>
          <span class="lb dis">X=</span><div class="spin w55">0<span class="sp"></span></div><span class="lb mm mm1">mm</span>
          <span class="lb">Y=</span><div class="spin w55">0<span class="sp"></span></div><span class="lb mm">mm</span>
          <i class="cb"></i><span>旋转</span>
          <div class="spin w67 dis">0.000<span class="sp"></span></div><span class="lb">°</span>
        </div>
      </div>

      <div class="gridbar">
        <svg class="closer"><use href="#clo"/></svg>
        <div class="bar tb g1">
          <svg class="i"><use href="#first"/></svg>
          <svg class="i"><use href="#prev"/></svg>
          <svg class="i"><use href="#next"/></svg>
          <svg class="i"><use href="#last"/></svg>
          <i class="sep sa"></i>
          <svg class="i"><use href="#up"/></svg>
          <svg class="i"><use href="#down"/></svg>
          <i class="sep sb"></i>
          <div class="it dis"><svg class="i"><use href="#ins"/></svg>插入</div>
          <div class="it"><svg class="i"><use href="#del"/></svg>删除</div>
          <div class="it"><svg class="i"><use href="#scale"/></svg>缩尺配筋</div>
          <div class="it"><svg class="i"><use href="#info"/></svg>钢筋信息</div>
          <div class="it"><svg class="i"><use href="#lib"/></svg>钢筋图库</div>
          <div class="it"><svg class="i"><use href="#oth"/></svg>其他<b class="ar a1"></b></div>
          <span>关闭</span><i class="sep"></i>
          <span class="weight">单构件钢筋总重(kg): 133.029</span>
        </div>
      </div>

      <div class="gridwrap">
        <i class="gridgrip"></i>
        <div class="frame">
          <div class="gleft">
            <div class="gtable">
              <table>
                <colgroup><col class="k0"><col class="k1"><col class="k2"><col class="k3"><col class="k4"><col class="k5"><col class="k6"><col class="k7"><col class="k8"><col class="k9"><col class="k10"><col class="k11"></colgroup>
                <thead>
                  <tr><th></th><th class="bk">筋号</th><th>直径<span class="mono">(mm)</span></th><th>级别</th><th>图号</th><th>图形</th><th>计算公式</th><th>公式描述</th><th>长度<span class="mono">(mm)</span></th><th class="act">根数</th><th>搭接</th><th>损耗</th></tr>
                </thead>
                <tbody>
                  <tr class="h33">
                    <td class="no">1</td><td class="bk"><span class="cn">全部纵筋</span>.1</td><td>8</td><td class="c">虫</td><td>18</td>
                    <td class="dr"><svg class="shape s33" viewBox="452 478 201 32"><text class="bt" x="467" y="498">96</text><path d="M485 486V501H622" class="st"/><text class="rt2" x="537" y="494">4480</text></svg></td>
                    <td>4500-20+12*d</td><td><span class="cn">层高</span>-<span class="cn">保护层</span>+<span class="cn">柱顶弯折</span></td><td>4576</td><td>11</td><td>0</td><td>0</td>
                  </tr>
                  <tr class="h34">
                    <td class="no">2</td><td class="bk"><span class="cn">全部纵筋</span>.2</td><td>14</td><td class="c">虫</td><td>18</td>
                    <td class="dr"><svg class="shape s34" viewBox="452 511 201 33"><text class="bt" x="462" y="532">168</text><path d="M485 520V535H622" class="st"/><text class="rt2" x="537" y="528">4480</text></svg></td>
                    <td>4500-20+12*d</td><td><span class="cn">层高</span>-<span class="cn">保护层</span>+<span class="cn">柱顶弯折</span></td><td>4448</td><td>8</td><td>0</td><td>0</td>
                  </tr>
                  <tr class="h34 cur">
                    <td class="no cu">3*</td><td class="bk"><span class="cn">箍筋</span>.1</td><td>8</td><td class="c">虫</td><td>195</td>
                    <td class="dr"><svg class="shape s34" viewBox="452 545 201 33"><text class="bt" x="507" y="567">160</text><path d="M534 552H567V574H534zM555 561L560 554M561 561L566 554" class="st"/><text class="rt2" x="535" y="571">360</text></svg></td>
                    <td>2*(360+160)+2*(11.9*d)</td><td></td><td>1230</td>
                    <td class="edit"><div class="editin"><div><span class="seltxt">(3566/150)+1+Ceil(2.3*48*8/min<br>(5*8,100))+Ceil(3566/150)+1</span></div><span class="dots">...</span></div></td>
                    <td>0</td><td>0</td>
                  </tr>
                  <tr class="h60">
                    <td class="no">4</td><td class="bk"><span class="cn">箍筋</span>.2</td><td>6</td><td class="c">虫</td><td>0</td>
                    <td class="dr"><svg class="shape s60" viewBox="452 579 201 59">
                      <path class="ln" d="M638 583H525L522 586V624L524 627H535M472 611H551V623L546 628H537M472 611L468 614V629L473 634H638"/>
                      <text class="mg" x="591" y="611" text-anchor="middle">230</text><text class="mg" x="548" y="617" text-anchor="middle">330</text><text class="mg" x="518" y="632" text-anchor="middle">160</text>
                      <text class="mg" transform="translate(533 599) rotate(90)" text-anchor="middle" y="3">90</text>
                      <text class="mg" transform="translate(477 617) rotate(90)" text-anchor="middle" y="3">50</text>
                      <text class="mg" transform="translate(541 623) rotate(90)" text-anchor="middle" y="3">40</text>
                      <text class="mg" transform="translate(541 632) rotate(90)" text-anchor="middle" y="3">60</text></svg></td>
                    <td>330+50+160+40+60+90+230</td><td></td><td>960</td><td>42</td><td>0</td><td>0</td>
                  </tr>
                  <tr class="h60">
                    <td class="no">5</td><td class="bk"><span class="cn">箍筋</span>.3</td><td>6</td><td class="c">虫</td><td>0</td>
                    <td class="dr"><svg class="shape s60" viewBox="452 639 201 59">
                      <path class="ln" d="M560 647H555L553 649V675H560M554 647V680M546 663V699M546 663H553"/>
                      <text class="mg" x="561" y="652" text-anchor="middle">55</text><text class="mg" x="556" y="669" text-anchor="middle">90</text><text class="mg" x="561" y="686" text-anchor="middle">45</text>
                      <text class="mg" transform="translate(542 669) rotate(90)" text-anchor="middle" y="3">180</text>
                      <text class="mg" transform="translate(569 664) rotate(90)" text-anchor="middle" y="3">360</text>
                      <text class="mg" transform="translate(535 683) rotate(90)" text-anchor="middle" y="3">230</text></svg></td>
                    <td>330+55+180+45+80+90+230</td><td></td><td>1010</td><td>42</td><td>0</td><td>0</td>
                  </tr>
                </tbody>
              </table>
            </div>
            <div class="hscroll"><span class="hl-a"></span><span class="hthumb"></span><span class="hr-a"></span></div>
          </div>
          <div class="vscroll"><span class="tup"></span><span class="vthumb"></span><span class="tdn"></span></div>
          <svg class="marks" viewBox="219 459 1147 246" aria-hidden="true">
            <ellipse cx="1113" cy="552" rx="140" ry="53" fill="none" stroke="#ff0000" stroke-width="7" transform="rotate(-1 1113 552)"/>
            <path d="M1040 578C1052 575 1072 576 1085 575" stroke="#ff0000" stroke-width="7" stroke-linecap="round" fill="none"/>
            <path d="M1141 559C1160 562 1178 558 1196 561" stroke="#ff0000" stroke-width="1.800" fill="none"/>
          </svg>
        </div>
      </div>
    </section>
  </div>

  <footer class="status">
    <span class="st1">X=93997 Y=4818</span>
    <span class="st2"><span class="cn">层高</span>:4.5m</span>
    <span class="st3"><span class="cn">底标高</span>:-0.03m</span>
    <span class="st4">1(2)</span>
    <span class="st5"><span class="cn">按鼠标左键选择一个图元，按右键中止或</span>ESC<span class="cn">取消</span></span>
    <span class="st6">964.7 FPS</span>
  </footer>

  <div class="taskbar">
    <div class="start"><svg class="tw16"><use href="#win"/></svg></div>
    <div class="search"><i class="cortana"></i><span class="hint">在这里输入你要搜索的内容</span><svg class="tw16 mic"><use href="#mic"/></svg></div>
    <div class="tk w49"><svg class="t20 tv"><use href="#tv"/></svg></div>
    <div class="tk w49"><svg class="t22"><use href="#fan"/></svg></div>
    <div class="tk w53"><svg class="t26"><use href="#swirl"/></svg></div>
    <div class="tk w44"><svg class="t22"><use href="#edge"/></svg></div>
    <div class="tk w43"><svg class="t24"><use href="#store"/></svg></div>
    <div class="tk w43"><svg class="t24"><use href="#fold"/></svg></div>
    <div class="tk w43"><svg class="t24"><use href="#ie"/></svg></div>
    <div class="tk w43 run"><svg class="t24"><use href="#gg"/></svg></div>
    <div class="tk w43 run"><svg class="t24"><use href="#ge"/></svg></div>
    <div class="tk w43 run active"><svg class="t24"><use href="#app"/></svg></div>
    <div class="tk w43 run"><svg class="t24"><use href="#note"/></svg></div>
    <div class="tk w43 run"><svg class="t24"><use href="#gr"/></svg></div>
    <div class="tk w43 run"><svg class="t24"><use href="#bk"/></svg></div>
    <div class="cpu">60%<br>CPU使用</div>
    <svg class="tray car"><use href="#car"/></svg>
    <svg class="tray"><use href="#bat"/></svg>
    <svg class="tray"><use href="#wifi"/></svg>
    <svg class="tray"><use href="#spk"/></svg>
    <svg class="tray kb"><use href="#kb"/></svg>
    <span class="lang">中</span>
    <svg class="tray sg"><use href="#sg"/></svg>
    <div class="clock">11:59<br><span class="dt">2017/11/20</span></div>
    <div class="msg"><svg class="msgi"><use href="#msg"/></svg><span class="badge">20</span></div>
  </div>

  <div class="ime">
    <svg class="imes"><use href="#sg"/></svg>
    <span class="imez">中</span><span class="imep">°,</span>
    <svg class="imei"><use href="#imem"/></svg>
    <svg class="imei"><use href="#imek"/></svg>
    <svg class="imei"><use href="#imeu"/></svg>
    <svg class="imei"><use href="#imet"/></svg>
    <svg class="imei"><use href="#imew"/></svg>
  </div>
</div>
</body>
</html>
```

FILE: styles.css
```css
* { box-sizing: border-box; }
html, body { margin: 0; padding: 0; }
body { width: 1366px; height: 768px; overflow: hidden; background: #f0f0f0; font: 12px/16px "Noto Sans CJK SC", "Liberation Sans", sans-serif; color: #1a1a1a; }
.defs { position: absolute; width: 0; height: 0; }
.app { position: relative; width: 1366px; height: 768px; display: flex; flex-direction: column; overflow: hidden; }
.i { width: 16px; height: 16px; flex: none; display: block; }
.cn { font-family: "Noto Sans CJK SC", sans-serif; font-size: 12px; }

/* title */
.title { height: 24px; background: #fff; display: flex; align-items: center; padding-left: 3px; flex: none; }
.ttext { margin-left: 4px; font-size: 12.6px; line-height: 24px; color: #111; white-space: nowrap; }
.winbtns { margin-left: auto; margin-right: 2px; display: flex; }
.wb { width: 46px; height: 22px; display: flex; align-items: center; justify-content: center; font-size: 13px; }
.wmin { width: 10px; border-top: 1px solid #111; }
.wmax { width: 9px; height: 9px; border: 1px solid #111; box-shadow: 2px -2px 0 -1px #fff, 2px -2px 0 0 #111; }

/* menu */
.menu { height: 28px; flex: none; display: flex; align-items: center; padding: 0 0 0 7px; background: linear-gradient(#fafafa, #f1f1f1); white-space: nowrap; }
.menu > span { margin-right: 10.5px; }
.it { display: flex; align-items: center; gap: 4px; white-space: nowrap; }
.mi { margin-left: -1px; }
.mi2 { margin-left: 3px; gap: 5px; }
.news { width: 176px; height: 24px; margin-left: 8px; padding-left: 28px; background: #f7f7f7; color: #0d6b72; line-height: 24px; }
.account { margin-left: 14px; gap: 3px; }
.iu { width: 18px; height: 18px; }
.account .ar { margin-left: 8px; }
.dou { margin: 0 0 0 7px !important; }
.bell { margin-left: 9px; width: 14px; height: 18px; }
.more { font-size: 13px; line-height: 14px; font-weight: 700; color: #111; }
.mmore { margin-left: auto; margin-right: 4px !important; margin-bottom: 6px; }
.rt { margin-left: auto; margin-bottom: 6px; }
.rr { margin-right: 3px; }
.ar { display: block; width: 0; height: 0; margin-left: 5px; border: 3px solid transparent; border-top: 3px solid #111; border-bottom: 0; flex: none; }
.a0 { margin-left: -4px; }
.a1 { margin-left: 1px; }
.a2 { margin-left: -3px; }
.a3 { margin-left: 0; }
.sv { margin-left: 2px; }
.dis { color: #9a9a9a; }
.sep { width: 1px; height: 22px; background: #c4c4c4; flex: none; display: block; }
.grip { width: 4px; height: 18px; flex: none; background: radial-gradient(#999 40%, transparent 45%) 0 0 / 3px 3px; display: block; }

.bar { display: flex; align-items: center; background: linear-gradient(#fbfbfb, #f1f1f1); border-radius: 2px; height: 26px; }

/* row 1 */
.row1 { height: 30px; flex: none; display: flex; align-items: center; padding-left: 2px; gap: 2px; }
.row1 .bar { height: 27px; }
.b1 { width: 149px; padding-left: 3px; gap: 7px; }
.b1 .sep { margin: 0 0 0 2px; }
.b2 { width: 548px; padding: 0 6px 0 3px; gap: 6px; margin-left: 1px; }
.g5 { gap: 5px; }
.b3 { flex: 1; margin-left: 1px; padding: 0 4px 0 0; gap: 5px; }
.b3 .it { gap: 4px; }
.whitebox { background: #fff; height: 25px; padding-right: 3px; }
.zm2 { margin-left: 4px; }
.s9 { margin-left: -3px; }
.w2d { width: 25px; }

/* main */
.main { height: 625px; flex: none; display: flex; }
.nav { width: 207px; flex: none; padding: 2px 5px 0 1px; display: flex; flex-direction: column; }
.navhead { height: 15px; background: #0a50e0; color: #fff; display: flex; align-items: center; padding-left: 0; margin: 0 -2px 1px -1px; font-size: 13px; }
.pin { width: 10px; height: 10px; margin-left: auto; }
.navx { margin: 0 5px 0 12px; font-size: 13px; }
.navbtn { height: 22px; flex: none; margin-bottom: 1px; padding: 0; border: 1px solid #a8a8a8; background: #f0f0f0; font: 12px/20px "Noto Sans CJK SC", sans-serif; color: #111; }
.treebox { height: 514px; flex: none; margin: 0 0 1px; border: 1px solid #a8a8a8; background: #fff; display: flex; flex-direction: column; overflow: hidden; }
.treebar { height: 27px; flex: none; padding: 3px 0 0 3px; display: flex; }
.pm { width: 22px; height: 22px; }
.treeview { flex: 1; display: flex; min-height: 0; }
.tree { width: 180px; flex: none; overflow: hidden; background: repeating-linear-gradient(#777 0 1px, transparent 1px 3px) 12px 0 / 1px 100% no-repeat; font: 10px/16px "DejaVu Sans Mono", monospace; color: #111; }
.node { position: relative; height: 16px; display: flex; align-items: center; white-space: nowrap; }
.fold { padding-left: 8px; }
.tw { width: 10px; height: 10px; flex: none; }
.fi { width: 16px; height: 14px; margin: 0 6px 0 5px; flex: none; }
.kid { padding-left: 43px; }
.kid::before { content: ""; position: absolute; left: 31px; top: 8px; width: 11px; border-top: 1px dotted #666; }
.kid::after { content: ""; position: absolute; left: 31px; top: 0; bottom: 0; border-left: 1px dotted #666; }
.last::after { bottom: 8px; }
.ti { width: 14px; height: 14px; flex: none; margin-right: 6px; }
.on::before { z-index: 1; }
.on { background: linear-gradient(#d9d9d9, #d9d9d9) 40px 0 / 69px 100% no-repeat; }
.tscroll { width: 15px; flex: none; display: flex; flex-direction: column; background: #f0f0f0; }
.tup, .tdn { height: 17px; flex: none; position: relative; }
.tup::after, .tdn::after { content: ""; position: absolute; left: 3px; width: 7px; height: 7px; border-left: 2px solid #666; border-top: 2px solid #666; }
.tup::after { top: 7px; transform: rotate(45deg); }
.tdn::after { top: 3px; transform: rotate(225deg); }
.tthumb { height: 270px; margin-top: 63px; background: #cdcdcd; flex: none; }
.tdn { margin-top: auto; }

/* work */
.work { flex: 1; min-width: 0; display: flex; flex-direction: column; }
.tbrow { height: 28px; flex: none; display: flex; align-items: center; gap: 2px; }
.tb { gap: 7px; padding-left: 0; }
.r2 { width: 791px; gap: 6.3px; }
.r3a { width: 567px; }
.r3b { width: 422px; }
.r3b .ar { margin-left: 2px; }
.r4 { width: 843px; gap: 6.2px; }
.g0 { margin-right: -2px; }
.combo { height: 22px; background: #fff; display: flex; align-items: center; justify-content: space-between; padding: 0 6px 0 1px; flex: none; }
.combo .ar { margin: 0; }
.c1 { width: 56px; }
.c2 { width: 67px; margin-left: -3px; }
.c3 { width: 69px; margin-left: -1px; }
.c4 { width: 58px; }
.s3 { margin: 0 0 0 -3px; }
.pr { margin-left: -2px; }
.hl { height: 24px; background: #dbe9f6; outline: 1px solid #0078d7; outline-offset: -1px; padding: 0 3px; }
.hn { margin: 0 -3px; }
.sel1 { width: 50px; padding: 0 4px; gap: 2px; }
.cad { display: block; width: 1159px; height: 231px; flex: none; background: #000; }
.cadt text { font: 13px "Liberation Sans", sans-serif; fill: #cfcfcf; text-anchor: middle; }
.cadt .a1t { fill: #c040c0; }

.snaprow { height: 30px; flex: none; display: flex; align-items: center; gap: 2px; }
.s1 { width: 210px; gap: 6px; }
.h1 { width: 75px; margin: 0 -6px 0 0; padding: 0 3px; gap: 3px; }
.h1 + .h1 { margin: 0; }
.s2 { width: 260px; gap: 4.5px; margin-left: 1px; }
.h2 { width: 51px; padding: 0 3px; gap: 3px; margin-right: -4.5px; }
.h2 + .h2 { margin-right: 0; }
.s3b { flex: 1; gap: 3px; padding-left: 4px; }
.lb { padding: 0 1px; }
.mm { padding-right: 6px; }
.mm1 { padding-right: 2px; }
.spin { height: 22px; background: #f6f6f6; border: 1px solid #b5b5b5; text-align: right; padding-right: 20px; line-height: 20px; position: relative; flex: none; }
.sp { position: absolute; right: 3px; top: 3px; width: 0; border: 4px solid transparent; border-top: 0; border-bottom: 4px solid #555; }
.sp::after { content: ""; position: absolute; left: -4px; top: 8px; border: 4px solid transparent; border-bottom: 0; border-top: 4px solid #555; }
.w55 { width: 55px; }
.w67 { width: 67px; }
.cb { width: 13px; height: 13px; border: 1px solid #666; background: #fff; margin: 0 3px 0 -2px; flex: none; display: block; }

.gridbar { height: 31px; flex: none; display: flex; align-items: center; gap: 3px; }
.closer { width: 12px; height: 12px; margin-bottom: 8px; flex: none; display: block; }
.g1 { flex: 1; padding-left: 1px; gap: 7px; height: 26px; }
.g1 > svg { margin-right: .5px; }
.sa { margin-right: -5px; }
.sb { margin-right: -2px; }
.weight { white-space: nowrap; }

.gridwrap { flex: 1; min-height: 0; display: flex; margin-bottom: 2px; }
.gridgrip { width: 11px; flex: none; background: radial-gradient(#b5b5b5 45%, transparent 50%) 3px 0 / 4px 4px; }
.frame { position: relative; flex: 1; min-width: 0; display: flex; border: 1px solid #a8a8a8; border-width: 1px 0 1px 1px; background: #f0f0f0; }
.gleft { width: 1128px; flex: none; display: flex; flex-direction: column; }
.gtable { height: 229px; flex: none; overflow: hidden; background: #fff; }
table { border-collapse: separate; border-spacing: 0; table-layout: fixed; width: 1128px; font: 10px/12px "DejaVu Sans Mono", monospace; color: #111; }
.k0 { width: 34px; } .k1 { width: 73px; } .k2 { width: 56px; } .k3 { width: 36px; } .k4 { width: 33px; } .k5 { width: 201px; }
.k6 { width: 166px; } .k7 { width: 156px; } .k8 { width: 61px; } .k9 { width: 263px; } .k10 { width: 39px; } .k11 { width: 10px; }
th { height: 19px; padding: 0; font: 12px/18px "Noto Sans CJK SC", sans-serif; font-weight: 400; background: linear-gradient(#fff, #ececec); border-right: 1px solid #bdbdbd; border-bottom: 1px solid #bdbdbd; white-space: nowrap; overflow: hidden; }
.mono { font: 10px "DejaVu Sans Mono", monospace; }
th.act { background: linear-gradient(#fbe3b4, #f2bd66); color: #5a0a78; }
td { padding: 2px 0 0 2px; background: #ccffd7; border-right: 1px solid #bdbdbd; border-bottom: 1px solid #bdbdbd; overflow: hidden; white-space: nowrap; }
.h33 td { height: 33px; }
.h34 td { height: 34px; }
.h60 td { height: 60px; padding-top: 4px; }
td.no { padding: 2px 0 0; text-align: center; background: linear-gradient(#fff, #ececec); font-size: 11px; }
.h60 td.no { padding-top: 4px; }
td.cu { background: #fdd38c; color: #5a0a78; }
.bk { border-right-color: #000; }
td.c { padding: 2px 0 0; text-align: center; font: 12px "Noto Sans CJK SC", sans-serif; }
.h60 td.c { padding-top: 4px; }
td.dr, .h60 td.dr { padding: 0; }
.shape { display: block; width: 201px; overflow: hidden; }
.s33 { height: 32px; } .s34 { height: 33px; } .s60 { height: 59px; }
.bt { font: 10px "DejaVu Sans Mono", monospace; fill: #111; }
.rt2 { font: 10px "DejaVu Sans Mono", monospace; fill: #f00; }
.st { fill: none; stroke: #000; stroke-width: 2; }
.ln { fill: none; stroke: #000; stroke-width: 1; }
.mg { font: 11px "DejaVu Sans Mono", monospace; fill: #f0f; }
td.edit { padding: 0; background: #e0fde6; }
.editin { height: 33px; display: flex; align-items: center; justify-content: space-between; padding: 0 2px 0 3px; }
.seltxt { background: #0078d7; color: #fff; line-height: 12px; }
.dots { width: 15px; height: 31px; background: #e1e1e1; border: 1px solid #adadad; color: #111; font: 700 10px/25px "DejaVu Sans Mono", monospace; text-align: center; letter-spacing: -1px; }
.hscroll { height: 16px; flex: none; position: relative; background: #f0f0f0; display: flex; align-items: center; }
.hl-a, .hr-a { width: 7px; height: 7px; border-left: 2px solid #666; border-top: 2px solid #666; position: absolute; }
.hl-a { left: 7px; transform: rotate(-45deg); }
.hr-a { right: 7px; transform: rotate(135deg); }
.hthumb { width: 546px; height: 16px; margin-left: 19px; background: #cdcdcd; }
.vscroll { width: 18px; flex: none; display: flex; flex-direction: column; background: #f0f0f0; }
.vthumb { height: 80px; margin-top: 2px; background: #cdcdcd; flex: none; }
.marks { position: absolute; left: 0; top: 0; width: 1147px; height: 246px; pointer-events: none; }

/* status */
.status { height: 21px; flex: none; display: flex; gap: 3px; font: 10px/19px "DejaVu Sans Mono", monospace; color: #111; }
.status > span { background: linear-gradient(#fff, #f6f6f6); border: 1px solid #ddd; padding-left: 1px; white-space: nowrap; overflow: hidden; }
.st1 { width: 147px; } .st2 { width: 77px; } .st3 { width: 97px; } .st4 { width: 47px; } .st5 { flex: 1; } .st6 { width: 70px; }

/* taskbar */
.taskbar { height: 40px; flex: none; background: #071a20; display: flex; align-items: center; color: #fff; }
.start { width: 48px; height: 40px; background: #000; display: flex; align-items: center; justify-content: center; flex: none; }
.tw16 { width: 16px; height: 16px; display: block; }
.search { width: 344px; height: 40px; background: #2f3234; display: flex; align-items: center; padding-left: 10px; flex: none; }
.cortana { width: 20px; height: 20px; border: 3px solid #e8e8e8; border-radius: 50%; flex: none; display: block; }
.hint { margin-left: 6px; font-size: 14px; color: #8f8f8f; }
.mic { margin-left: auto; margin-right: 13px; width: 18px; height: 18px; }
.tk { height: 40px; flex: none; display: flex; align-items: center; justify-content: center; position: relative; }
.w49 { width: 49px; } .w53 { width: 53px; } .w44 { width: 44px; } .w43 { width: 43px; }
.active { background: #2a393e; }
.run::after { content: ""; position: absolute; left: 4px; right: 4px; bottom: 0; height: 2px; background: #7fc4f4; }
.active::after { left: 0; right: 0; }
.t20 { width: 20px; height: 16px; } .t22 { width: 22px; height: 22px; } .t24 { width: 24px; height: 24px; } .t26 { width: 26px; height: 24px; }
.cpu { width: 64px; margin-left: 10px; text-align: center; font-size: 12px; line-height: 17px; flex: none; }
.tray { width: 16px; height: 14px; flex: none; margin-left: 9px; }
.car { width: 14px; height: 8px; margin-left: 11px; }
.kb { width: 24px; margin-left: 9px; }
.lang { margin-left: 5px; font-size: 13px; }
.tray.sg { width: 20px; height: 20px; margin-left: 10px; }
.clock { width: 70px; margin-left: 3px; text-align: center; font-size: 12px; line-height: 20px; flex: none; }
.dt { letter-spacing: -.6px; }
.msg { position: relative; margin-left: 13px; width: 24px; height: 28px; }
.msgi { width: 18px; height: 18px; display: block; margin-left: 3px; }
.badge { position: absolute; left: 7px; top: 9px; width: 19px; height: 19px; border-radius: 50%; background: #333; border: 2px solid #777; font-size: 11px; line-height: 15px; text-align: center; font-weight: 700; }

/* floating IME bar */
.ime { position: absolute; left: 868px; top: 3px; width: 185px; height: 24px; background: #fff; border: 1px solid #b8cfe4; display: flex; align-items: center; gap: 5px; }
.imes { width: 26px; height: 26px; margin: 0 4px 0 -1px; }
.imez { color: #1f8ae0; font-size: 15px; font-weight: 700; }
.imep { color: #1f8ae0; font-size: 13px; font-weight: 700; width: 17px; }
.imei { width: 18px; height: 16px; }
```
